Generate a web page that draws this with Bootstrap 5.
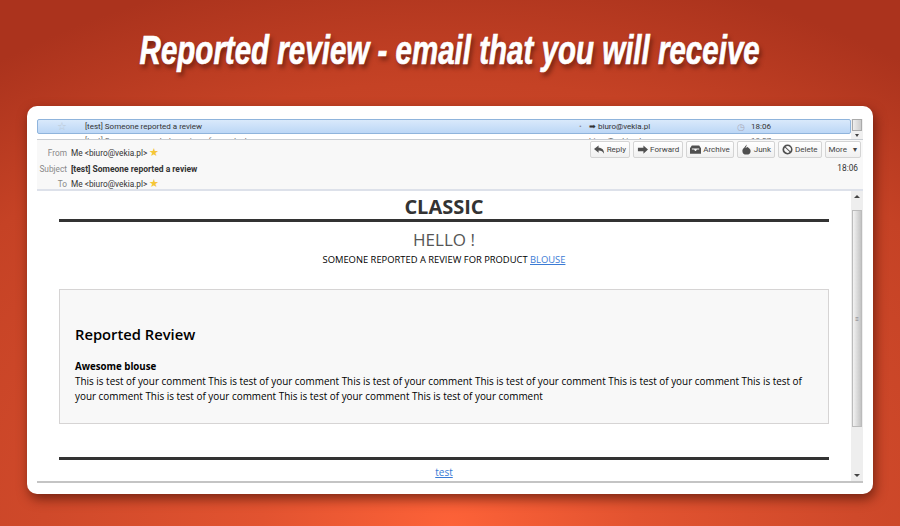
<!DOCTYPE html>
<html>
<head>
    <meta charset="UTF-8">
    <title>Reported review</title>
    <link href="https://cdn.jsdelivr.net/npm/bootstrap@5.3.2/dist/css/bootstrap.min.css" rel="stylesheet">
    <style>
        html, body { height: 100%; }
        body {
            width: 900px;
            height: 526px;
            overflow: hidden;
            font-family: "Open Sans", sans-serif;
            background: radial-gradient(ellipse 780px 570px at 450px 526px, #fd6238 0%, #e25330 24%, #cf492a 52%, #c54225 78%, #ab331d 100%);
        }
        .promo-title {
            height: 106px;
            padding-top: 26px;
            margin: 0;
            text-align: center;
            color: #fff;
            font: italic 700 41px/48px "Liberation Sans", sans-serif;
            text-shadow: 3px 4px 5px rgba(60, 15, 5, .55);
            white-space: nowrap;
        }
        .promo-title span { display: inline-block; transform: scaleX(.72); -webkit-text-stroke: .7px #fff; }
        .shot-card {
            width: 846px;
            height: 388px;
            margin-left: 27px;
            padding: 13px 10px 10px;
            background: #fff;
            border-radius: 10px;
            box-shadow: 2px 5px 12px rgba(70, 15, 5, .65);
            font: 8px "Roboto", sans-serif;
            color: #333;
        }
        .list-pane { height: 21px; overflow: hidden; border-bottom: 1px solid #c9cdd2; }
        .list-scroll { width: 12px; background: #f0f0f0; display: flex; flex-direction: column; align-items: center; }
        .list-thumb { width: 10px; height: 12px; background: linear-gradient(90deg, #eee, #ccc); border: 1px solid #aaa; }
        .list-arrow { width: 0; height: 0; margin-top: 3px; border: 2px solid transparent; border-bottom: 0; border-top: 3px solid #444; }
        .mail-row { height: 15px; line-height: 14px; border: 1px solid #8fb4dc; border-radius: 2px; background: linear-gradient(#d9e9fb, #bcd7f6); color: #333; }
        .mail-row2 { height: 5px; padding-left: 1px; line-height: 13px; color: #666; }
        .cell-star { width: 47px; text-align: center; color: #bcc8d4; font-size: 11px; }
        .cell-subject { width: 494px; }
        .cell-dot { width: 10px; color: #889; }
        .cell-from { width: 148px; }
        .cell-clock { width: 14px; color: #aab; font-size: 9px; }
        .mail-head { height: 51px; background: #f8f8f8; border-bottom: 2px solid #dde1ea; font-size: 8.3px; }
        .head-labels { padding-top: 6px; width: 30px; text-align: right; color: #888; line-height: 15.5px; }
        .head-values { padding: 6px 0 0 4px; line-height: 15.5px; color: #333; flex: 1; }
        .head-bold { font-size: 8.5px; font-weight: 700; }
        .head-star { color: #f5c636; font-size: 11px; line-height: 8px; }
        .head-right { padding: 1px 2px 0 0; }
        .tool-btn {
            display: flex;
            align-items: center;
            gap: 2px;
            height: 17px;
            padding: 0 3px;
            border: 1px solid #d4d4d4;
            border-radius: 2px;
            background: linear-gradient(#fff, #f0f0f0);
            font-size: 8px;
            color: #444;
        }
        .tool-btn svg { width: 11px; height: 11px; fill: #505050; }
        .tool-row { gap: 3px; }
        .head-time { text-align: right; padding: 5px 3px 0 0; color: #333; }
        .mail-wrap { height: 292px; border-bottom: 2px solid #c4c4c4; }
        .mail-body { flex: 1; padding: 0 22px 0 22px; color: #000; overflow: hidden; }
        .mail-scroll { width: 12px; background: #eee; display: flex; flex-direction: column; align-items: center; }
        .scroll-thumb { width: 10px; height: 217px; margin-top: 12px; background: linear-gradient(90deg, #f2f2f2, #c4c4c4); border: 1px solid #bbb; display: flex; align-items: center; justify-content: center; font-size: 6px; color: #777; }
        .arrow-up { width: 0; height: 0; margin-top: 4px; border: 3px solid transparent; border-top: 0; border-bottom: 3px solid #444; }
        .arrow-down { width: 0; height: 0; margin-top: auto; margin-bottom: 4px; border: 3px solid transparent; border-bottom: 0; border-top: 3px solid #444; }
        .shop-name { font: 700 20px/31px "Open Sans", sans-serif; height: 32px; margin-top: -1px; padding-top: 1px; text-align: center; color: #333; border-bottom: 3px solid #333; }
        .hello { font: 17px/24px "Open Sans", sans-serif; margin-top: 6px; text-align: center; color: #555; }
        .notice { font: 9.4px/15px "Open Sans", sans-serif; text-align: center; }
        .notice a, .foot-link a { color: #3a7bd5; }
        .review-box { height: 135px; margin-top: 22px; padding: 33px 15px 0; background: #f8f8f8; border: 1px solid #d6d4d4; font: 9.92px/15px "Open Sans", sans-serif; }
        .review-head { font-size: 14.75px; font-weight: 600; line-height: 22px; margin-bottom: 15px; }
        .review-name { font-size: 9.7px; font-weight: 700; line-height: 14px; }
        .foot-rule { height: 3px; margin-top: 33px; background: #333; }
        .foot-link { font: 10px/14px "Open Sans", sans-serif; margin-top: 5px; text-align: center; }
    </style>
</head>
<body>
<h1 class="promo-title"><span>Reported review - email that you will receive</span></h1>

<div class="shot-card">
    <div class="list-pane d-flex">
        <div class="flex-grow-1">
            <div class="mail-row d-flex">
                <div class="cell-star">☆</div>
                <div class="cell-subject">[test] Someone reported a review</div>
                <div class="cell-dot">•</div>
                <div class="cell-from">➡ biuro@vekia.pl</div>
                <div class="cell-clock">◷</div>
                <div>18:06</div>
            </div>
            <div class="mail-row2 d-flex">
                <div class="cell-star"></div>
                <div class="cell-subject">[test] Someone reported a review of a product</div>
                <div class="cell-dot"></div>
                <div class="cell-from">biuro@vekia.pl</div>
                <div class="cell-clock"></div>
                <div>18:07</div>
            </div>
        </div>
        <div class="list-scroll"><div class="list-thumb"></div><div class="list-arrow"></div></div>
    </div>

    <div class="mail-head d-flex">
        <div class="head-labels">
            <div>From</div>
            <div>Subject</div>
            <div>To</div>
        </div>
        <div class="head-values">
            <div>Me &lt;biuro@vekia.pl&gt; <span class="head-star">★</span></div>
            <div class="head-bold">[test] Someone reported a review</div>
            <div>Me &lt;biuro@vekia.pl&gt; <span class="head-star">★</span></div>
        </div>
        <div class="head-right">
            <div class="d-flex tool-row justify-content-end">
                <div class="tool-btn"><svg viewBox="0 0 12 11"><path d="M5 1 0 5l5 4V6.500c3 0 4.500 1 6 3.500 0-4-2-6.500-6-6.500z"/></svg>Reply</div>
                <div class="tool-btn"><svg viewBox="0 0 12 11"><path d="M7 1l5 4.500L7 10V7.500H1v-4h6z"/></svg>Forward</div>
                <div class="tool-btn"><svg viewBox="0 0 12 11"><path d="M2 1h8l2 3v6H0V4zm0 3.500v1h2.500l1 1.500h1l1-1.500H10v-1z"/></svg>Archive</div>
                <div class="tool-btn"><svg viewBox="0 0 12 11"><path d="M6 0c.5 2-1 2.500-1 4 1-.5 1.500-1 1.500-1.500C9 4 10.500 5.500 10.500 7a4.500 4 0 0 1-9 0C1.500 4.500 4.500 3 6 0z"/></svg>Junk</div>
                <div class="tool-btn"><svg viewBox="0 0 12 11"><path fill-rule="evenodd" d="M6 0a5.500 5.500 0 1 0 0 11A5.500 5.500 0 0 0 6 0zM3.200 3.300 8.300 8.300a3.600 3.600 0 0 1-5.100-5zM3.900 2.500a3.600 3.600 0 0 1 5.100 5z"/></svg>Delete</div>
                <div class="tool-btn">More <span class="ms-1">▾</span></div>
            </div>
            <div class="head-time">18:06</div>
        </div>
    </div>

    <div class="mail-wrap d-flex">
        <div class="mail-body">
            <div class="shop-name">CLASSIC</div>
            <div class="hello">HELLO !</div>
            <div class="notice">SOMEONE REPORTED A REVIEW FOR PRODUCT <a href="#">BLOUSE</a></div>
            <div class="review-box">
                <div class="review-head">Reported Review</div>
                <div class="review-name">Awesome blouse</div>
                <div>This is test of your comment This is test of your comment This is test of your comment This is test of your comment This is test of your comment This is test of your comment This is test of your comment This is test of your comment This is test of your comment</div>
            </div>
            <div class="foot-rule"></div>
            <div class="foot-link"><a href="#">test</a></div>
        </div>
        <div class="mail-scroll">
            <div class="arrow-up"></div>
            <div class="scroll-thumb">≡</div>
            <div class="arrow-down"></div>
        </div>
    </div>
</div>

<script src="https://cdn.jsdelivr.net/npm/bootstrap@5.3.2/dist/js/bootstrap.bundle.min.js"></script>
</body>
</html>
